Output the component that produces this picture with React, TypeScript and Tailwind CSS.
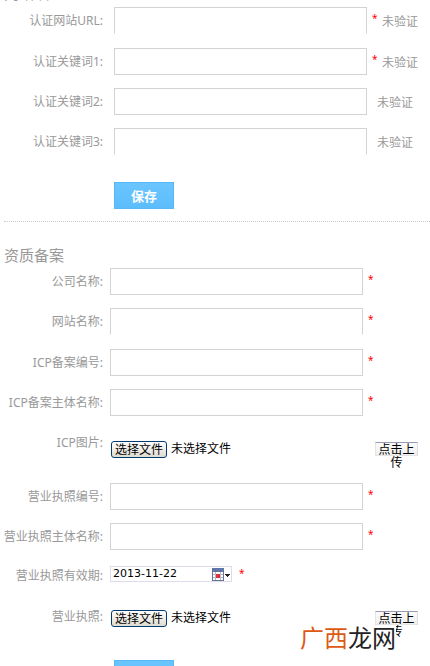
import { useRef } from "react";
import type { ReactNode } from "react";
import clsx from "clsx";

type RowProps = {
  id: string;
  label: string;
  required?: boolean;
  status?: string;
  wide?: boolean;
  openBottom?: boolean;
  className?: string;
};

const Label = ({ id, children }: { id: string; children: ReactNode }) => (
  <label htmlFor={id} className="w-[103px] shrink-0 text-right leading-[27px] whitespace-nowrap">
    {children}
  </label>
);

const Star = () => <span className="w-[5px] text-[10px] leading-[22px] text-[#ff0000]">*</span>;

// label + text box + star / status
const TextRow = ({ id, label, required, status, wide, openBottom, className }: RowProps) => (
  <div className={clsx("flex h-[27px]", wide ? "gap-[11px]" : "gap-[7px]", className ?? "mb-[13px]")}>
    <Label id={id}>{label}</Label>
    <div className="flex gap-[5px]">
      <input
        id={id}
        type="text"
        className={clsx(
          "h-[27px] w-[253px] shrink-0 border border-[#d3d3d3] bg-white px-1 text-black outline-none",
          openBottom && "border-b-transparent"
        )}
      />
      {required && <Star />}
      {status && (
        <span className={clsx("leading-[29px] whitespace-nowrap", !required && "pl-[5px]")}>{status}</span>
      )}
    </div>
  </div>
);

const FileRow = ({ id, label, className, fieldClass }: { id: string; label: string; className: string; fieldClass: string }) => {
  const fileRef = useRef<HTMLInputElement>(null);

  return (
    <div className={clsx("flex h-[41px] gap-2", className)}>
      <Label id={id}>{label}</Label>
      <div className={clsx("flex items-start text-black", fieldClass)}>
        <div className="flex w-[264px] gap-1">
          <input ref={fileRef} id={id} type="file" className="hidden" />
          <button
            type="button"
            onClick={() => fileRef.current?.click()}
            className="h-[17px] w-[56px] rounded-[3px] border border-[#003c74] bg-linear-to-b from-white to-[#dedbd0] leading-[15px] whitespace-nowrap"
          >
            选择文件
          </button>
          <span className="leading-[16px]">未选择文件</span>
        </div>
        {/* narrow button, the last character drops under it */}
        <button
          type="button"
          className="mt-px flex h-[14px] w-[43px] items-start justify-center border border-t-[#9a9ab5] border-r-[#dcdce4] border-b-[#e4e4e4] border-l-[#e4e4e4] bg-linear-to-b from-[#fbfbfb] to-[#f0f0f0] px-[2px] leading-[13px]"
        >
          点击上传
        </button>
      </div>
    </div>
  );
};

const SaveButton = () => (
  <button
    type="submit"
    className="ml-[114px] block h-[27px] w-[60px] border border-[#56b8f6] bg-linear-to-b from-[#6ac5ff] to-[#5dbdfb] text-[13px] leading-[22px] font-bold text-white"
  >
    保存
  </button>
);

const CalendarIcon = () => (
  <svg width="18" height="13" viewBox="0 0 18 13" shapeRendering="crispEdges" aria-hidden="true">
    <rect x="0" y="0" width="12" height="13" fill="#6b7396" />
    <rect x="0" y="0" width="12" height="3" fill="#5f76ad" />
    <rect x="1" y="4" width="10" height="8" fill="#ffffff" />
    <path d="M1 6.5h10M1 9.5h10M3.5 4v8M8.5 4v8" stroke="#b4b9d2" />
    <rect x="4" y="6" width="4" height="4" fill="#e0323a" />
    <path d="M13 6h5v1h-1v1h-1v1h-1V8h-1V7h-1z" fill="#222222" />
  </svg>
);

const siteRows: RowProps[] = [
  { id: "site-url", label: "认证网站URL:", required: true, status: "未验证", openBottom: true, className: "mb-[14px]" },
  { id: "keyword-1", label: "认证关键词1:", required: true, status: "未验证" },
  { id: "keyword-2", label: "认证关键词2:", status: "未验证" },
  { id: "keyword-3", label: "认证关键词3:", status: "未验证", openBottom: true, className: "mb-[27px]" },
];

const companyRows: RowProps[] = [
  { id: "company", label: "公司名称:", required: true },
  { id: "site-name", label: "网站名称:", required: true, openBottom: true, className: "mb-[14px]" },
  { id: "icp-no", label: "ICP备案编号:", required: true },
  { id: "icp-owner", label: "ICP备案主体名称:", required: true },
];

const licenseRows: RowProps[] = [
  { id: "license-no", label: "营业执照编号:", required: true },
  { id: "license-owner", label: "营业执照主体名称:", required: true, className: "mb-[12px]" },
];

export default function App() {
  return (
    <main className="relative h-screen overflow-hidden bg-white font-['Noto_Sans','Noto_Sans_CJK_SC',sans-serif] text-[12px] text-[#999999]">
      {/* Site verification */}
      <form onSubmit={(e) => e.preventDefault()}>
        <h2 className="-mt-[17px] mb-1 h-5 pl-1 text-[15px] leading-5">网站认证</h2>
        {siteRows.map((row) => (
          <TextRow key={row.id} {...row} wide />
        ))}
        <SaveButton />
      </form>

      <hr className="mt-3 ml-1 border-t border-dotted border-[#cccccc]" />

      {/* Company records */}
      <form onSubmit={(e) => e.preventDefault()}>
        <h2 className="mt-[23px] mb-[3px] pl-1 text-[15px] leading-5">资质备案</h2>
        {companyRows.map((row) => (
          <TextRow key={row.id} {...row} />
        ))}

        <FileRow id="icp-image" label="ICP图片:" className="mb-[13px]" fieldClass="pt-3" />

        {licenseRows.map((row) => (
          <TextRow key={row.id} {...row} />
        ))}

        <div className="flex h-[41px] gap-[7px]">
          <Label id="license-date">营业执照有效期:</Label>
          <div className="flex items-start gap-[7px]">
            <div className="mt-1 flex h-4 w-[122px] items-center border border-[#dcdcea] pr-px">
              <input
                id="license-date"
                type="text"
                defaultValue="2013-11-22"
                className="h-[14px] min-w-0 flex-1 pl-[2px] font-['DejaVu_Sans',sans-serif] text-[11px] leading-[14px] text-black outline-none"
              />
              <button type="button" aria-label="选择日期">
                <CalendarIcon />
              </button>
            </div>
            <Star />
          </div>
        </div>

        <FileRow id="license-image" label="营业执照:" className="mb-4" fieldClass="pt-[7px]" />
        <SaveButton />
      </form>

      {/* Site mark in the corner */}
      <div className="absolute right-[34px] bottom-[17px] bg-white font-['Noto_Sans_CJK_SC',sans-serif] text-[24px] leading-6 text-[#222222]">
        <span className="text-[#dd5a14]">广西</span>龙网
      </div>
    </main>
  );
}
